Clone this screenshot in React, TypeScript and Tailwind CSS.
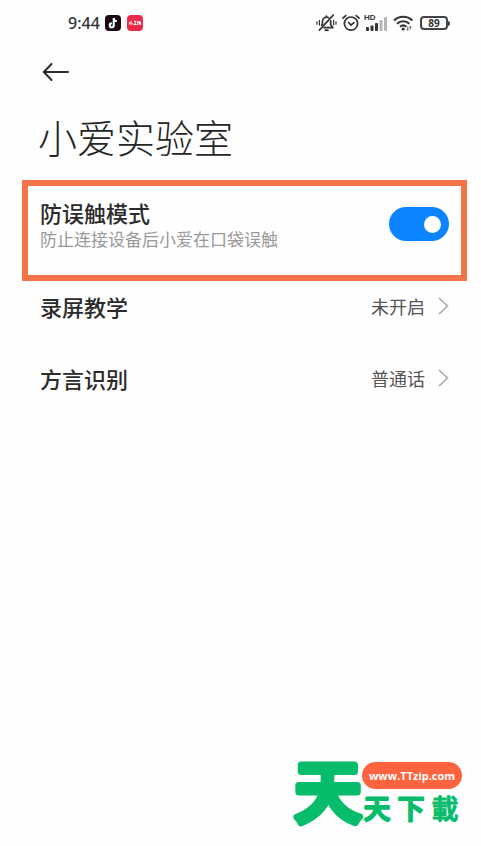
import React, { useState } from "react";

type RowProps = { label: string; value: string };

const StatusBar = () => {
  return (
    <div className="flex h-[46px] items-center justify-between pl-[68px] pr-[31px] text-[#333]">
      <div className="flex items-center">
        <span className="w-[37px] whitespace-nowrap font-['Noto_Sans','Noto_Sans_CJK_SC',sans-serif] text-[16px] font-medium leading-5">9:44</span>
        {/* music app */}
        <svg width="16" height="16" viewBox="0 0 16 16" aria-hidden="true">
          <rect width="16" height="16" rx="4" fill="#1d0713" />
          <path d="M8.6 3v7.2a2 2 0 1 1-2-2M8.6 3.4c.3 1.7 1.3 2.6 3 2.8" fill="none" stroke="#7fe0e0" strokeWidth="2" />
          <path d="M8.8 3v7.4a2 2 0 1 1-2-2M8.8 3.4c.3 1.7 1.3 2.6 3 2.8" fill="none" stroke="#fff" strokeWidth="1.6" />
        </svg>
        {/* red notification badge */}
        <svg className="ml-[6px]" width="16" height="16" viewBox="0 0 16 16" aria-hidden="true">
          <rect width="16" height="16" rx="4" fill="#e92a4b" />
          <path d="M1.8 9.4 3 7M4 6v4M5 8l1 1.6M7 6.3h2.4M8.2 6.3v3.2M6.8 9.6h2.8M10.8 6v4M10.4 7.2h3.2v2.6M12.4 6v3.6" fill="none" stroke="#fff" strokeWidth="1" />
        </svg>
      </div>

      <div className="flex items-center">
        <svg width="21" height="18" viewBox="0 0 21 18" fill="none" stroke="#333" strokeWidth="1.7" strokeLinecap="round" strokeLinejoin="round" aria-hidden="true">
          <path d="M5.6 11.2 6.4 10V7.4a4.2 4.2 0 0 1 6-3.8M14.7 6.8v4l2.2 2.9H8M9.3 16.2h2.6M10.4 3V2" />
          <path d="M3.4 6.3v4.8M1 7.8v2.4M17.6 6.3v4.4M20 7.8v2.4" strokeWidth="1.2" />
          <path d="M17.2 1.2 3.4 16.2" />
        </svg>
        <svg className="ml-[5px]" width="18" height="18" viewBox="0 0 18 18" fill="none" stroke="#333" strokeWidth="1.7" strokeLinecap="round" aria-hidden="true">
          <circle cx="9" cy="9.6" r="6.6" />
          <path d="m1 4.2 2.8-2.6M17 4.2l-2.8-2.6M6.5 8.5 9 11l3-2.3" />
        </svg>
        <div className="ml-1 flex h-[18px] w-[23px] flex-col justify-between">
          <span className="font-['Liberation_Sans',sans-serif] text-[8px] font-bold leading-[8px]">HD</span>
          <svg className="-mt-[7px] ml-[2px] shrink-0" width="21" height="16" viewBox="0 0 21 16" fill="#333" aria-hidden="true">
            <rect x="0" y="11" width="3" height="4" rx="1" />
            <rect x="4.5" y="9.5" width="3" height="5.5" rx="1" />
            <rect x="9" y="7" width="3" height="8" rx="1" />
            <rect x="13.5" y="4" width="3" height="11" rx="1" fill="#b5b5b5" />
            <rect x="18" y="1" width="3" height="14" rx="1" fill="#b5b5b5" />
          </svg>
        </div>
        <svg className="ml-[6px]" width="21" height="18" viewBox="0 0 21 18" fill="none" stroke="#333" strokeWidth="2.1" aria-hidden="true">
          <path d="M1 6.4a13.5 13.5 0 0 1 18.4 0M4 9.7a9.2 9.2 0 0 1 12.4 0M7 12.7a5 5 0 0 1 6.4 0" />
          <circle cx="10.2" cy="15" r="1.6" fill="#333" stroke="none" />
          <path d="M14.8 12.6v3.6M17.2 12v3.6M13.6 15l1.2 1.4M17.2 12l1.2 1.3" strokeWidth=".8" />
        </svg>
        <div className="ml-[6px] flex items-center">
          <span className="flex h-[14px] w-[28px] items-center justify-center rounded-[4px] border-2 border-[#444] font-['Noto_Sans',sans-serif] text-[10px] font-bold leading-none">
            89
          </span>
          <span className="h-[5px] w-[2px] rounded-r bg-[#444]"></span>
        </div>
      </div>
    </div>
  );
};

const Row = ({ label, value }: RowProps) => {
  return (
    <button type="button" className="flex h-[50px] w-full items-center justify-between text-left">
      <span className="text-[22px] font-medium leading-7 text-[#2b2b2b]">{label}</span>
      <span className="flex items-center gap-3">
        <span className="text-[18px] leading-6 text-[#555]">{value}</span>
        <svg width="12" height="18" viewBox="0 0 12 18" fill="none" stroke="#aaa" strokeWidth="1.6" aria-hidden="true">
          <path d="m2 1 8.5 8L2 17" />
        </svg>
      </span>
    </button>
  );
};

const SiteLogo = () => {
  return (
    <div className="mt-auto flex items-start justify-end pb-[18px] pr-[19px] font-['Noto_Sans_CJK_TC',sans-serif] text-[#07bd6c]">
      {/* the thick round outline gives the characters their soft ends */}
      <svg className="overflow-visible" width="68" height="70" viewBox="0 0 68 70" fill="currentColor" stroke="currentColor" strokeLinecap="round" strokeLinejoin="round">
        <text x="34" y="59" fontSize="67" fontWeight="500" strokeWidth="7" textAnchor="middle">
          天
        </text>
      </svg>
      <div className="flex flex-col pt-1">
        <span className="flex h-[27px] w-[100px] items-center justify-center rounded-full bg-[#ff6340] font-['Open_Sans',sans-serif] text-[11px] font-bold leading-4 text-white">
          www.TTzip.com
        </span>
        <svg className="mt-1 overflow-visible" width="100" height="34" viewBox="0 0 100 34" fill="currentColor" stroke="currentColor" strokeWidth="2" strokeLinejoin="round" fontSize="27" fontWeight="500" textAnchor="middle">
          <text x="15" y="26">天</text>
          <text x="49" y="26">下</text>
          <text x="83" y="26" strokeWidth="1">載</text>
        </svg>
      </div>
    </div>
  );
};

const App = () => {
  const [guard, setGuard] = useState(true);

  return (
    <div className="flex min-h-screen flex-col bg-[#fefefe] font-['Noto_Sans_CJK_SC',sans-serif]">
      <StatusBar />

      <header className="pl-[38px]">
        <button type="button" aria-label="返回" className="flex h-[52px] items-center pl-1">
          <svg width="28" height="20" viewBox="0 0 28 20" fill="none" stroke="#2b2b2b" strokeWidth="2" strokeLinecap="round" strokeLinejoin="round" aria-hidden="true">
            <path d="M26 10H2M9.5 2 1.8 10l7.7 8" />
          </svg>
        </button>
        <h1 className="text-[39px] font-light leading-[76px] text-[#262626]">小爱实验室</h1>
      </header>

      <main>
        <div className="ml-[22px] mr-[14px] mt-[6px] flex items-start justify-between border-[6px] border-[#f47349] px-3 pb-[23px] pt-3">
          <label htmlFor="guard" className="flex flex-col">
            <span className="text-[22px] font-medium leading-7 text-[#2b2b2b]">防误触模式</span>
            <span className="text-[17px] leading-[26px] text-[#999]">防止连接设备后小爱在口袋误触</span>
          </label>
          <input
            id="guard"
            type="checkbox"
            role="switch"
            checked={guard}
            onChange={() => setGuard(!guard)}
            className="mt-[9px] flex h-[34px] w-[60px] shrink-0 appearance-none items-center rounded-full bg-[#ccc] px-2 before:h-[17px] before:w-[17px] before:rounded-full before:bg-white checked:justify-end checked:bg-[#0d84ff]"
          />
        </div>
        <div className="flex flex-col gap-[22px] pl-10 pr-8">
          <Row label="录屏教学" value="未开启" />
          <Row label="方言识别" value="普通话" />
        </div>
      </main>

      <SiteLogo />
    </div>
  );
};

export default App;
